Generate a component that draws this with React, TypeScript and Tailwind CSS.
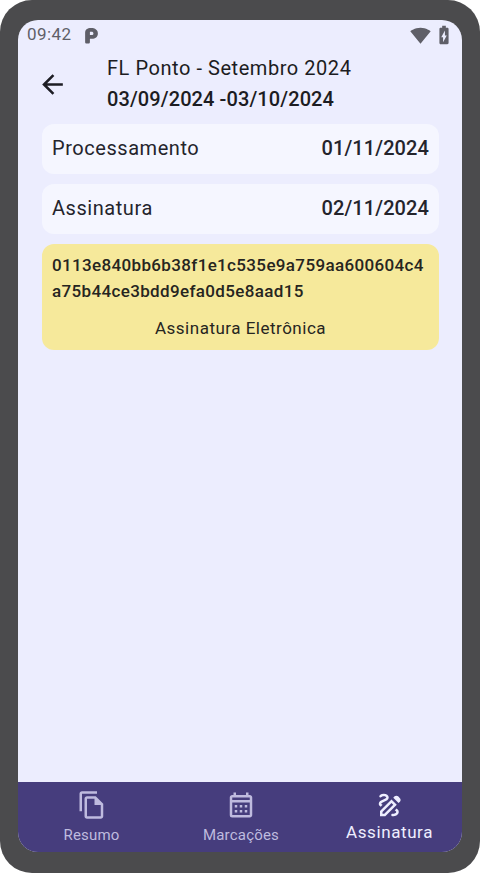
import { MdArrowBack, MdBatteryChargingFull, MdOutlineCalendarMonth, MdOutlineDraw, MdOutlineFileCopy, MdSignalWifi4Bar } from 'react-icons/md';

const font = { fontFamily: 'Roboto, Inter, sans-serif' };

function NavItem({ label, active, icon }: { label: string; active?: boolean; icon: React.ReactNode }) {
  return (
    <div className="flex flex-col items-center">
      <div className={active ? 'text-[#eeeeff]' : 'text-[#bfbbdf]'}>{icon}</div>
      <span
        className={
          active
            ? 'mt-[2px] text-[17px] leading-[20px] tracking-[0.6px] text-[#eeeeff]'
            : 'mt-[6px] text-[15px] leading-[18px] tracking-[0.2px] text-[#bfbbdf]'
        }
      >
        {label}
      </span>
    </div>
  );
}

function InfoRow({ label, value }: { label: string; value: string }) {
  return (
    <div className="flex h-[50px] items-center justify-between rounded-[12px] bg-[#f5f6ff] px-[10px] pb-[2px] text-[#24242c]">
      <span className="text-[20px] tracking-[0.55px]">{label}</span>
      <span className="text-[20px] font-medium tracking-[0.1px]">{value}</span>
    </div>
  );
}

export default function App() {
  return (
    <div className="h-[873px] w-[480px] overflow-hidden bg-white" style={font}>
      <div className="h-full rounded-[32px] bg-[#4b4b4d] px-[18px] pb-[21px] pt-[20px]">
        <div className="flex h-full flex-col overflow-hidden rounded-[20px] bg-[#ecedfe]">
          <div className="flex h-[30px] items-center justify-between pl-[9px] pr-[7px] text-[#5f5f68]">
            <div className="flex items-center gap-[13px]">
              <span className="text-[17px] tracking-[0.4px]">09:42</span>
              <svg width="15" height="17" viewBox="0 0 14 16" fill="currentColor">
                <path fillRule="evenodd" d="M1 5.500C1 2.500 3 1 6.500 1 10.500 1 13 2.800 13 6S10.500 11 7.500 11H5.500V14C5.500 15 5 15.500 4 15.500H2.500C1.500 15.500 1 15 1 14ZM5.500 4.500V7.500H7C8.200 7.500 8.800 7 8.800 6S8.200 4.500 7 4.500Z" />
              </svg>
            </div>
            <div className="flex items-center gap-[2px]">
              <MdSignalWifi4Bar size={21} />
              <MdBatteryChargingFull size={22} />
            </div>
          </div>

          <div className="flex h-[64px] items-start pt-[3px]">
            <div className="flex w-[89px] shrink-0 pl-[19px] pt-[16px] text-[#1d1d24]">
              <MdArrowBack size={31} />
            </div>
            <div className="text-[#1c1c22]">
              <div className="text-[20px] leading-[31px] tracking-[0.55px]">FL Ponto - Setembro 2024</div>
              <div className="text-[20px] font-medium leading-[30px] tracking-[0.1px]">03/09/2024 -03/10/2024</div>
            </div>
          </div>

          <div className="mt-[10px] flex flex-col gap-[10px] pl-[24px] pr-[23px]">
            <InfoRow label="Processamento" value="01/11/2024" />
            <InfoRow label="Assinatura" value="02/11/2024" />
            <div className="h-[106px] rounded-[12px] bg-[#f6e99b] px-[10px] pt-[8px] text-[#26251f]">
              <div className="whitespace-nowrap text-[17px] font-medium leading-[26px] tracking-[0.35px]">
                0113e840bb6b38f1e1c535e9a759aa600604c4
                <br />
                a75b44ce3bdd9efa0d5e8aad15
              </div>
              <div className="mt-[14px] text-center text-[17px] leading-[20px] tracking-[0.5px]">Assinatura Eletrônica</div>
            </div>
          </div>

          <div className="mt-auto grid h-[70px] grid-cols-[147px_152px_145px] bg-[#463d7d] pt-[8px]">
            <NavItem label="Resumo" icon={<MdOutlineFileCopy size={30} />} />
            <NavItem label="Marcações" icon={<MdOutlineCalendarMonth size={30} />} />
            <NavItem active label="Assinatura" icon={<MdOutlineDraw size={30} />} />
          </div>
        </div>
      </div>
    </div>
  );
}
